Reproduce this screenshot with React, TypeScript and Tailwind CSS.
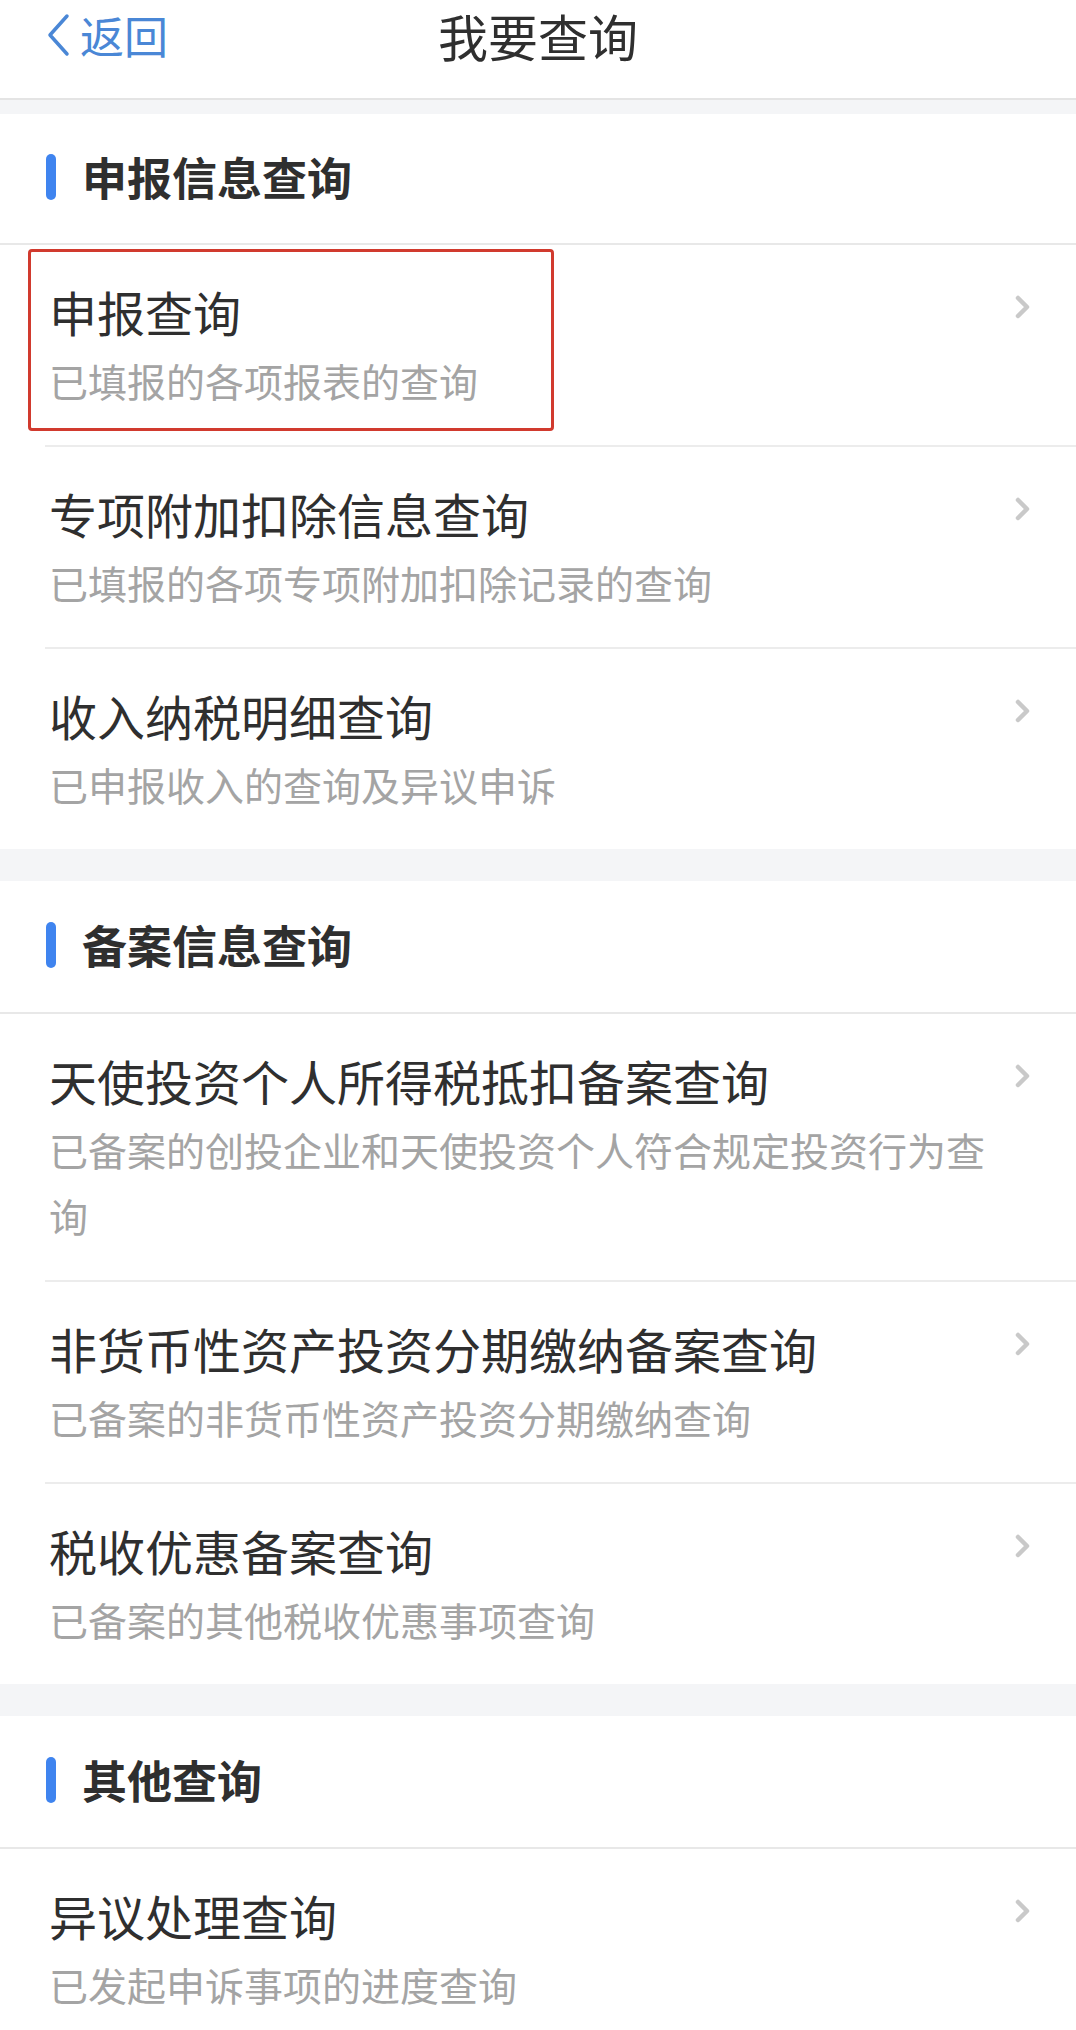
type Item = { title: string; desc: string; highlight?: boolean };
type Section = { title: string; items: Item[] };

const sections: Section[] = [
  {
    title: "申报信息查询",
    items: [
      { title: "申报查询", desc: "已填报的各项报表的查询", highlight: true },
      { title: "专项附加扣除信息查询", desc: "已填报的各项专项附加扣除记录的查询" },
      { title: "收入纳税明细查询", desc: "已申报收入的查询及异议申诉" },
    ],
  },
  {
    title: "备案信息查询",
    items: [
      {
        title: "天使投资个人所得税抵扣备案查询",
        desc: "已备案的创投企业和天使投资个人符合规定投资行为查询",
      },
      { title: "非货币性资产投资分期缴纳备案查询", desc: "已备案的非货币性资产投资分期缴纳查询" },
      { title: "税收优惠备案查询", desc: "已备案的其他税收优惠事项查询" },
    ],
  },
  {
    title: "其他查询",
    items: [{ title: "异议处理查询", desc: "已发起申诉事项的进度查询" }],
  },
];

function Chevron() {
  return (
    <svg width="18" height="26" viewBox="0 0 18 26" fill="none">
      <path d="M4 4 L13 13 L4 22" stroke="#c9c9c9" strokeWidth="4.5" strokeLinecap="round" strokeLinejoin="round" />
    </svg>
  );
}

function Row({ item, last }: { item: Item; last: boolean }) {
  return (
    <div className="relative">
      <div className="flex items-start pl-[49px] pr-[44px] pt-[34px] pb-[32px]">
        <div className="flex-1 min-w-0 pr-[18px]">
          <div className="text-[48px] leading-[64px] text-[#2f2f2f]">{item.title}</div>
          <div className="mt-[4px] text-[39px] leading-[66px] text-[#a4a4a4]">{item.desc}</div>
        </div>
        <div className="mt-[15px] w-[18px] shrink-0">
          <Chevron />
        </div>
      </div>
      {!last && <div className="ml-[45px] h-[2px] bg-[#ececec]" />}
      {item.highlight && (
        <div className="absolute left-[28px] top-[4px] w-[526px] h-[182px] border-[3px] border-[#d13a2e] rounded-[4px]" />
      )}
    </div>
  );
}

export default function App() {
  return (
    <div className="w-[1076px] min-h-screen bg-white [font-family:'Noto_Sans_CJK_SC','Noto_Sans',sans-serif]">
      {/* nav bar */}
      <div className="grid grid-cols-[1fr_auto_1fr] items-start h-[100px] border-b-2 border-[#e4e4e4]">
        <div className="flex items-center h-[70px] pl-[45px] gap-[9px] text-[#4a87d6]">
          <svg width="26" height="44" viewBox="0 0 26 44" fill="none">
            <path d="M22 3 L5 22 L22 41" stroke="#4a87d6" strokeWidth="3.5" strokeLinecap="round" strokeLinejoin="round" />
          </svg>
          <span className="text-[44px] leading-[70px]">返回</span>
        </div>
        <div className="text-[50px] leading-[70px] text-[#2f2f2f]">我要查询</div>
        <div />
      </div>

      {sections.map((s, si) => (
        <div key={s.title}>
          <div className={si === 0 ? "h-[14px] bg-[#f4f5f7]" : "h-[32px] bg-[#f4f5f7]"} />
          <div
            className={
              si === 0
                ? "flex items-center h-[131px] pb-[4px] pl-[46px] gap-[26px] border-b-2 border-[#e8e8e8]"
                : "flex items-center h-[133px] pb-[4px] pl-[46px] gap-[26px] border-b-2 border-[#e8e8e8]"
            }
          >
            <div className="w-[10px] h-[46px] rounded-full bg-[#3f84ef]" />
            <div className="text-[45px] font-bold leading-[60px] text-[#2f2f2f]">{s.title}</div>
          </div>
          {s.items.map((it, i) => (
            <Row key={it.title} item={it} last={i === s.items.length - 1} />
          ))}
        </div>
      ))}
    </div>
  );
}
